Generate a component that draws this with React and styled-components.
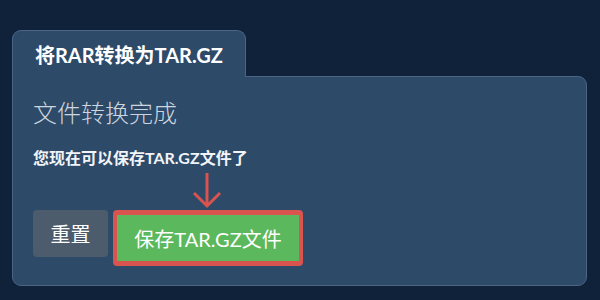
import React from 'react';
import styled, { createGlobalStyle } from 'styled-components';

const GlobalStyle = createGlobalStyle`
  html, body {
    margin: 0;
    padding: 0;
    background: #10223a;
    font-family: Lato, "Noto Sans CJK SC", sans-serif;
  }
`;

const Page = styled.div`
  width: 600px;
  height: 300px;
  box-sizing: border-box;
  padding: 30px 13px 14px 12px;
  display: flex;
  flex-direction: column;
`;

const Tab = styled.div`
  align-self: flex-start;
  width: 234px;
  height: 47px;
  box-sizing: border-box;
  padding-left: 22px;
  display: flex;
  align-items: center;
  background: #2d4a69;
  border: 1px solid #4b6587;
  border-bottom: none;
  border-radius: 9px 9px 0 0;
  margin-bottom: -1px;
  position: relative;
  z-index: 1;
  color: #ffffff;
  font-size: 20px;
  font-weight: 700;
`;

const Panel = styled.div`
  flex: 1;
  background: #2d4a69;
  border: 1px solid #4b6587;
  border-radius: 0 9px 9px 9px;
  padding: 22px 20px 0 20px;
  display: flex;
  flex-direction: column;
`;

const Heading = styled.div`
  color: #cdd5de;
  font-size: 24px;
  font-weight: 300;
  line-height: 28px;
`;

const Note = styled.div`
  margin-top: 20px;
  color: #f2f4f7;
  font-size: 16px;
  font-weight: 700;
  line-height: 22px;
`;

const ArrowRow = styled.div`
  height: 41px;
  box-sizing: border-box;
  padding: 3px 0 0 159px;
  display: flex;
  align-items: flex-start;
`;

const Actions = styled.div`
  display: flex;
  align-items: flex-start;
  gap: 5px;
`;

const Button = styled.button`
  box-sizing: border-box;
  border: ${(p) => (p.$primary ? '4px solid #d9534f' : 'none')};
  border-top-width: ${(p) => (p.$primary ? '5px' : '0')};
  border-bottom-width: ${(p) => (p.$primary ? '5px' : '0')};
  border-radius: 4px;
  font-family: Lato, "Noto Sans CJK SC", sans-serif;
  font-size: 20px;
  color: #ffffff;
  cursor: pointer;
  background: ${(p) => (p.$primary ? '#5cb85c' : '#4d5c6d')};
  height: ${(p) => (p.$primary ? '56px' : '47px')};
  width: ${(p) => (p.$primary ? '190px' : '75px')};
  padding: 0;
`;

const Arrow = () => (
  <svg width="30" height="37" viewBox="0 0 30 37">
    <path d="M15 1 V34 M2 21 L15 34 L28 21" fill="none" stroke="#d9534f" strokeWidth="3" />
  </svg>
);

const App = () => (
  <Page>
    <GlobalStyle />
    <Tab>将RAR转换为TAR.GZ</Tab>
    <Panel>
      <Heading>文件转换完成</Heading>
      <Note>您现在可以保存TAR.GZ文件了</Note>
      <ArrowRow>
        <Arrow />
      </ArrowRow>
      <Actions>
        <Button>重置</Button>
        <Button $primary>保存TAR.GZ文件</Button>
      </Actions>
    </Panel>
  </Page>
);

export default App;
